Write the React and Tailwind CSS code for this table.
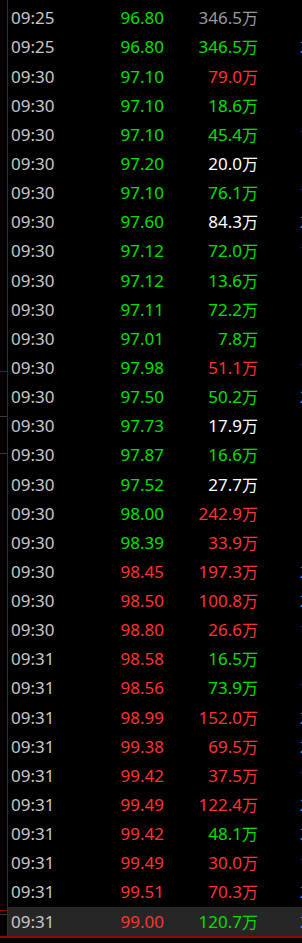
const GREEN = "text-[#00e000]";
const RED = "text-[#ff3333]";
const WHITE = "text-white";
const GRAY = "text-[#9a9a9a]";

const c = { g: GREEN, r: RED, w: WHITE, x: GRAY };

// time, price, volume, price colour, volume colour, right column digit
const rows = [
  ["09:25", "96.80", "346.5", "g", "x", ""],
  ["09:25", "96.80", "346.5", "g", "g", "2"],
  ["09:30", "97.10", "79.0", "g", "r", ""],
  ["09:30", "97.10", "18.6", "g", "g", ""],
  ["09:30", "97.10", "45.4", "g", "g", "1"],
  ["09:30", "97.20", "20.0", "g", "w", ""],
  ["09:30", "97.10", "76.1", "g", "g", "1"],
  ["09:30", "97.60", "84.3", "g", "w", "2"],
  ["09:30", "97.12", "72.0", "g", "g", "1"],
  ["09:30", "97.12", "13.6", "g", "g", ""],
  ["09:30", "97.11", "72.2", "g", "g", ""],
  ["09:30", "97.01", "7.8", "g", "g", ""],
  ["09:30", "97.98", "51.1", "g", "r", "1"],
  ["09:30", "97.50", "50.2", "g", "g", "2"],
  ["09:30", "97.73", "17.9", "g", "w", ""],
  ["09:30", "97.87", "16.6", "g", "g", ""],
  ["09:30", "97.52", "27.7", "g", "w", ""],
  ["09:30", "98.00", "242.9", "g", "r", ""],
  ["09:30", "98.39", "33.9", "g", "r", ""],
  ["09:30", "98.45", "197.3", "r", "r", "2"],
  ["09:30", "98.50", "100.8", "r", "r", "2"],
  ["09:30", "98.80", "26.6", "r", "r", "1"],
  ["09:31", "98.58", "16.5", "r", "g", ""],
  ["09:31", "98.56", "73.9", "r", "g", "1"],
  ["09:31", "98.99", "152.0", "r", "r", "2"],
  ["09:31", "99.38", "69.5", "r", "r", "2"],
  ["09:31", "99.42", "37.5", "r", "r", "1"],
  ["09:31", "99.49", "122.4", "r", "r", "2"],
  ["09:31", "99.42", "48.1", "r", "g", "2"],
  ["09:31", "99.49", "30.0", "r", "r", "1"],
  ["09:31", "99.51", "70.3", "r", "r", "2"],
  ["09:31", "99.00", "120.7", "r", "g", "2"],
];

export default function App() {
  return (
    <div
      className="w-[302px] h-[943px] bg-black overflow-hidden flex flex-col"
      style={{ fontFamily: '"Noto Sans", "Noto Sans CJK SC", sans-serif' }}
    >
      <div className="flex h-[936px]">
        {/* left stub of the neighbouring panel */}
        <div className="w-[7px] shrink-0 flex flex-col">
          <div className="h-[371px]" />
          <div className="h-[46px] border-t border-[#a00000] border-b border-b-[#3c3c3c]" />
          <div className="h-[37px] border-b border-[#3c3c3c]" />
          <div className="flex-1" />
          <div className="h-[5px] border-t border-[#a00000] border-b border-b-[#3c3c3c]" />
          <div className="h-[21px]" />
        </div>
        <div className="w-px shrink-0 bg-[#990000]" />

        <div className="flex-1 min-w-0 pt-[3.2px] overflow-hidden">
          {rows.map(([t, p, v, pc, vc, d], i) => (
            <div
              key={i}
              className={`flex items-center h-[29.15px] text-[17px] leading-none ${
                i === rows.length - 1 ? "bg-[#262626]" : ""
              }`}
            >
              <div className="w-[156px] shrink-0 flex justify-between pl-[3px]">
                <span className="text-[#c8c8c8]">{t}</span>
                <span className={c[pc]}>{p}</span>
              </div>
              <div className={`w-[94px] shrink-0 text-right ${c[vc]}`}>
                {v}
                <span className="text-[16px]">万</span>
              </div>
              <div className="w-[42px] shrink-0" />
              <span className="shrink-0 text-[#1e9bff] whitespace-nowrap">{d}</span>
            </div>
          ))}
        </div>
      </div>
      <div className="h-[2px] bg-[#990000]" />
    </div>
  );
}
